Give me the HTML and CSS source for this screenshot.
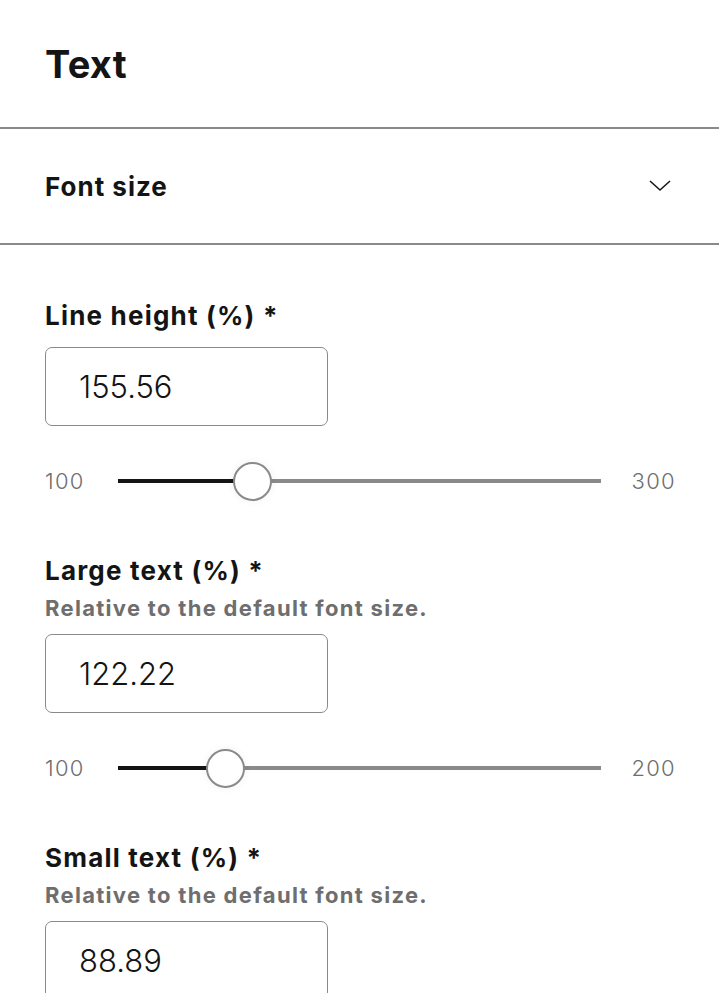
FILE: index.html
```html
<!DOCTYPE html>
<html lang="en">
<head>
  <meta charset="UTF-8" />
  <meta name="viewport" content="width=device-width, initial-scale=1.0"/>
  <title>Text settings</title>
  <link rel="stylesheet" href="styles.css">
</head>
<body>
  <header class="panel-header">
    <h1>Text</h1>
  </header>

  <div class="accordion">
    <span class="accordion-title">Font size</span>
    <svg class="chevron" width="22" height="14" viewBox="0 0 22 14">
      <path d="M1 2 L11 11 L21 2" fill="none" stroke="#1a1a1a" stroke-width="1.6"/>
    </svg>
  </div>

  <div class="fields">
    <div class="field">
      <label class="field-label" for="line-height">Line height (%) *</label>
      <input class="field-input" id="line-height" value="155.56" />
      <div class="slider">
        <span class="slider-min">100</span>
        <div class="track">
          <div class="fill" style="width: 27.78%"></div>
          <div class="thumb" style="left: 27.78%"></div>
        </div>
        <span class="slider-max">300</span>
      </div>
    </div>

    <div class="field">
      <label class="field-label" for="large-text">Large text (%) *</label>
      <div class="field-hint">Relative to the default font size.</div>
      <input class="field-input" id="large-text" value="122.22" />
      <div class="slider">
        <span class="slider-min">100</span>
        <div class="track">
          <div class="fill" style="width: 22.22%"></div>
          <div class="thumb" style="left: 22.22%"></div>
        </div>
        <span class="slider-max">200</span>
      </div>
    </div>

    <div class="field">
      <label class="field-label" for="small-text">Small text (%) *</label>
      <div class="field-hint">Relative to the default font size.</div>
      <input class="field-input" id="small-text" value="88.89" />
    </div>
  </div>
</body>
</html>
```

FILE: styles.css
```css
body {
  margin: 0;
  font-family: 'Inter', 'Noto Sans', sans-serif;
  color: #141414;
  background: #fff;
  overflow: hidden;
}

.panel-header {
  height: 127px;
  display: flex;
  align-items: center;
  padding: 0 45px;
  border-bottom: 2px solid #8a8a8a;
}

.panel-header h1 {
  margin: 0;
  font-size: 38px;
  font-weight: 700;
  letter-spacing: 0.3px;
  line-height: 1;
}

.accordion {
  height: 114px;
  display: flex;
  align-items: center;
  justify-content: space-between;
  padding: 0 48px 0 45px;
  border-bottom: 2px solid #8a8a8a;
}

.accordion-title {
  font-size: 26px;
  font-weight: 700;
  letter-spacing: 1px;
}

.fields {
  padding: 56px 45px 0;
}

.field {
  margin-bottom: 56px;
}

.field-label {
  display: block;
  font-size: 26px;
  font-weight: 700;
  letter-spacing: 1.2px;
  line-height: 30px;
  margin-bottom: 16px;
}

.field-hint {
  margin-top: -9px;
  margin-bottom: 11px;
  font-size: 22px;
  font-weight: 700;
  letter-spacing: 1.3px;
  color: #6e6e6e;
  line-height: 30px;
}

.field-input {
  display: block;
  box-sizing: border-box;
  width: 283px;
  height: 79px;
  padding: 0 33px;
  font-family: 'Inter', 'Noto Sans', sans-serif;
  font-size: 31px;
  font-weight: 300;
  color: #141414;
  border: 1.5px solid #8a8a8a;
  border-radius: 7px;
  outline: none;
}

.slider {
  display: flex;
  align-items: center;
  height: 38px;
  margin: 36px -2px 0 0;
}

.slider-min,
.slider-max {
  font-size: 22px;
  font-weight: 300;
  letter-spacing: 1.3px;
  color: #6e6e6e;
  width: 73px;
}

.slider-max {
  text-align: right;
  width: 75px;
}

.track {
  position: relative;
  flex: 1;
  height: 4px;
  background: #8a8a8a;
}

.fill {
  height: 100%;
  background: #141414;
}

.thumb {
  position: absolute;
  top: 50%;
  width: 35px;
  height: 35px;
  margin: -19px 0 0 -19px;
  border: 2px solid #8a8a8a;
  border-radius: 50%;
  background: #fff;
  box-shadow: 0 0 8px rgba(0, 0, 0, 0.06);
}
```
